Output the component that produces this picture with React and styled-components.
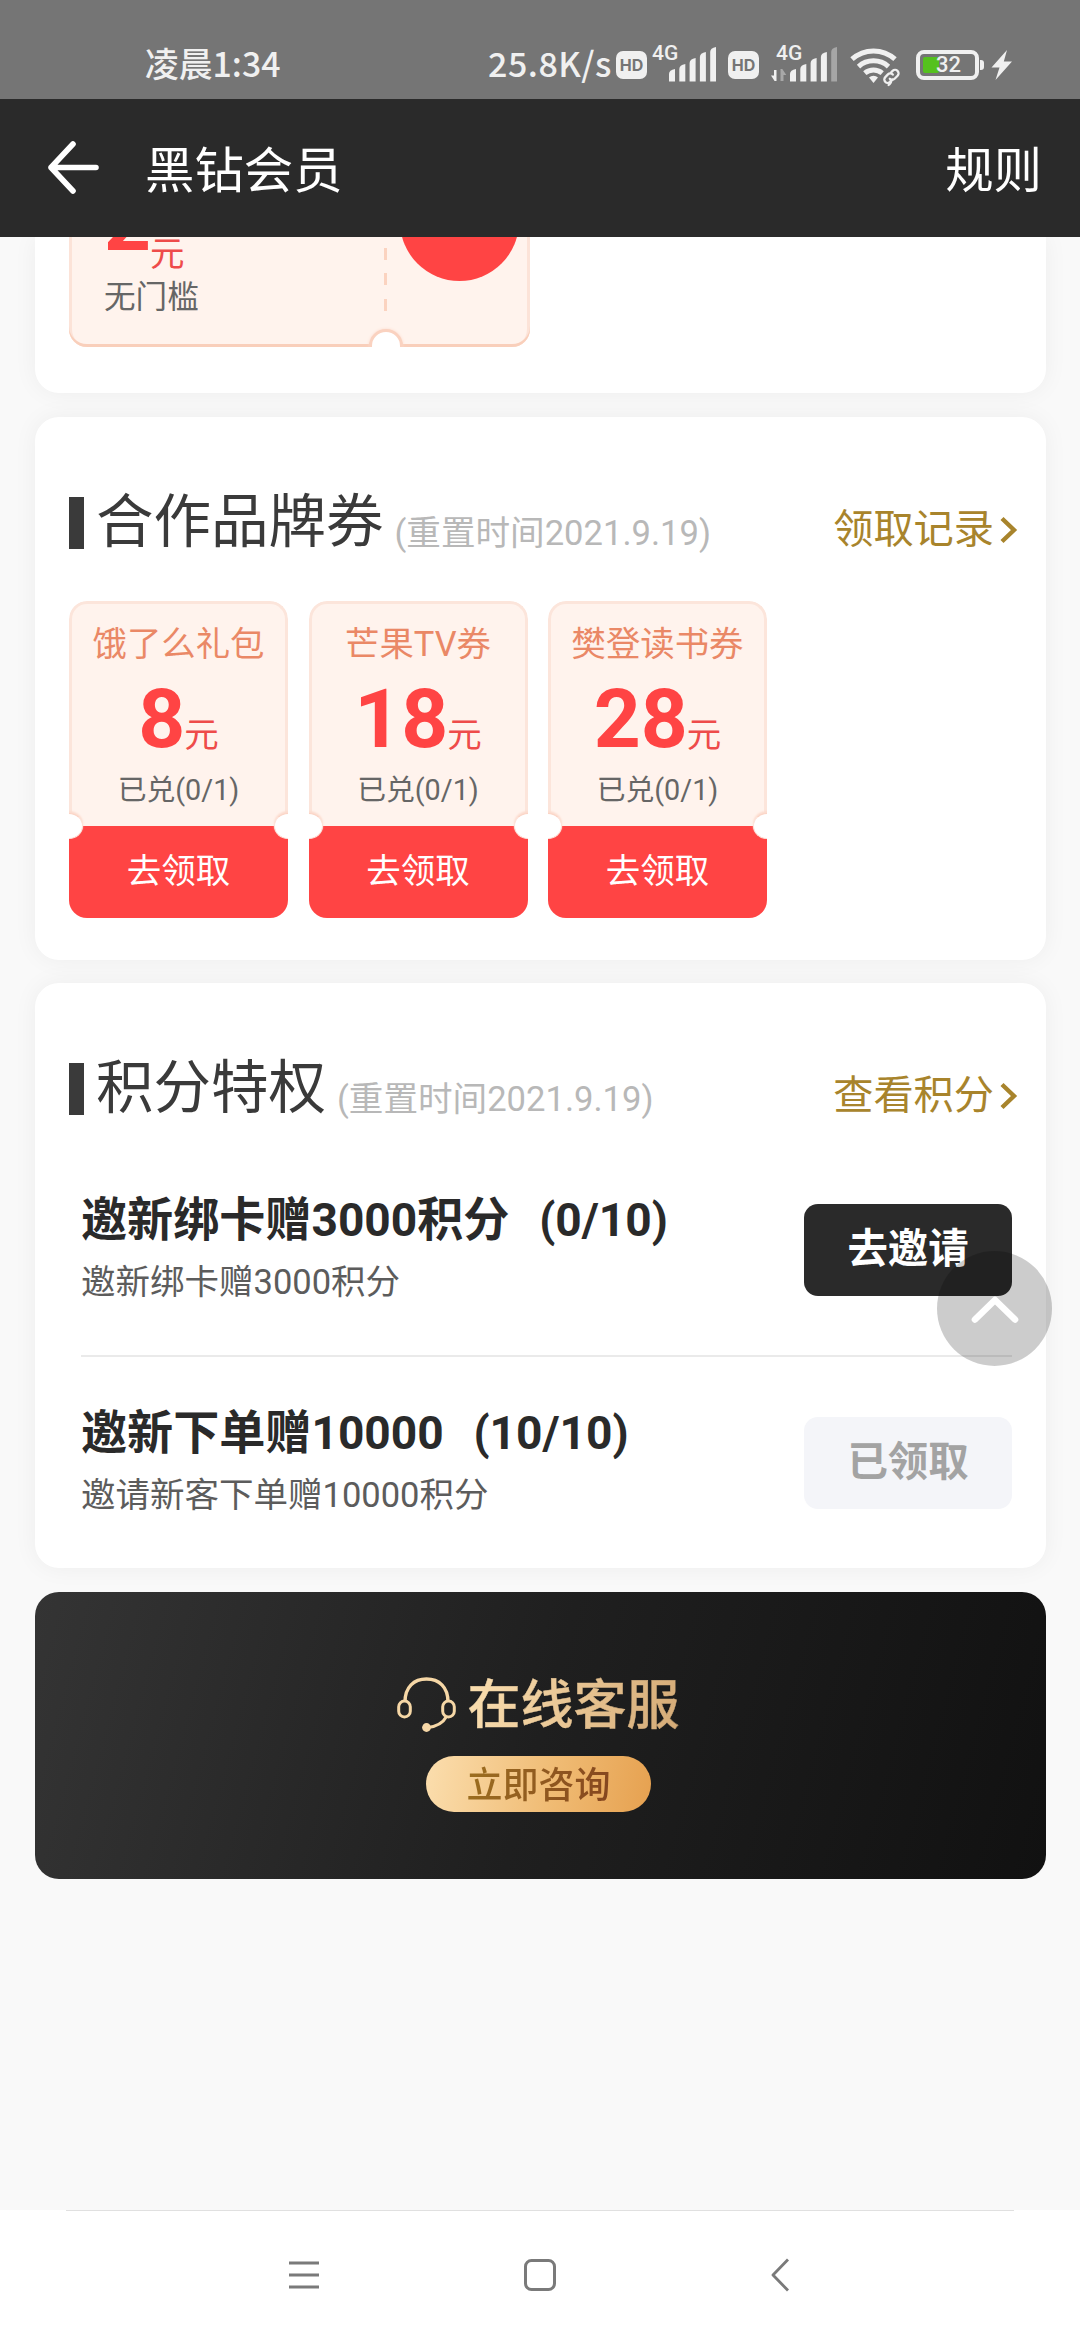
import React from 'react'
import styled, { createGlobalStyle, css } from 'styled-components'

const coupons = [
  { name: '饿了么礼包', price: 8, used: '已兑(0/1)' },
  { name: '芒果TV券', price: 18, used: '已兑(0/1)' },
  { name: '樊登读书券', price: 28, used: '已兑(0/1)' },
]

const tasks = [
  { title: '邀新绑卡赠3000积分  (0/10)', desc: '邀新绑卡赠3000积分', action: '去邀请', done: false },
  { title: '邀新下单赠10000  (10/10)', desc: '邀请新客下单赠10000积分', action: '已领取', done: true },
]

const barTops = [22, 17, 11, 5, 0]

function Signal({ weak, arrows }) {
  return (
    <SignalBox $arrows={arrows}>
      <NetType>4G</NetType>
      <svg width="66" height="36" viewBox="0 0 66 36">
        {arrows && (
          <g>
            <path d="M5.5 24v11H3.6L0 29.6h3V24z" fill="#f0f0f0" />
            <path d="M9.5 35V23h1.8l4 6h-2.8v6z" fill="#a8a8a8" />
          </g>
        )}
        {barTops.map((top, i) => (
          <path
            key={top}
            d={`M${19 + i * 10.3} 35.5V${top + 6}q0 -4 6 -5V35.5z`}
            fill={weak && i === 4 ? '#a6a6a6' : '#f0f0f0'}
          />
        ))}
      </svg>
    </SignalBox>
  )
}

function StatusBar() {
  return (
    <Status>
      <Clock>凌晨1:34</Clock>
      <Speed>25.8K/s</Speed>
      <Hd>HD</Hd>
      <Signal />
      <Hd $second>HD</Hd>
      <Signal weak arrows />
      <Wifi width="52" height="38" viewBox="0 0 52 38" fill="none" stroke="#f0f0f0">
        <path d="M2 13.2a32 32 0 0 1 43 0" strokeWidth="5" />
        <path d="M8.5 20.6a22.5 22.5 0 0 1 30 0" strokeWidth="5" />
        <path d="M14.8 27.2a13.5 13.5 0 0 1 17.4 0" strokeWidth="5" />
        <path d="M19 31.5a6.5 6.5 0 0 1 9 0L23.5 37z" fill="#f0f0f0" stroke="none" />
        <g stroke="#757575" strokeWidth="6">
          <rect x="34" y="28.5" width="9" height="6.5" rx="3.2" transform="rotate(-45 38.5 31.7)" />
        </g>
        <g strokeWidth="2.3" strokeLinecap="round">
          <path d="M40.5 33.5a3.6 3.6 0 0 1-.6 4.3l-1.3 1.2" />
          <path d="M41 26.5l1.6-1.6a3.4 3.4 0 0 1 5 4.8l-3 3a3.4 3.4 0 0 1-4.8 0" />
          <path d="M42.6 33.5l-2.4 2.4a3.4 3.4 0 0 1-4.9-4.8l2.6-2.7a3.4 3.4 0 0 1 4.9.2" />
        </g>
      </Wifi>
      <Battery>
        <Charge />
        <Level>32</Level>
      </Battery>
      <Tip />
      <svg width="22" height="30" viewBox="0 0 22 30">
        <path d="M16 0L.5 17.5h8L4.5 30 21 11.5h-8.2z" fill="#f0f0f0" />
      </svg>
    </Status>
  )
}

function SectionHead({ title, link }) {
  return (
    <Head>
      <Mark />
      <Title>{title}</Title>
      <ResetTime>(重置时间2021.9.19)</ResetTime>
      <Link>
        {link}
        <svg width="18" height="28" viewBox="0 0 18 28" fill="none">
          <path d="M2 2.5L14 14L2 25.5" stroke="#a8842c" strokeWidth="4.4" />
        </svg>
      </Link>
    </Head>
  )
}

function App() {
  return (
    <Screen>
      <GlobalStyle />
      <StatusBar />
      <Header>
        <svg width="54" height="56" viewBox="0 0 54 56" fill="none">
          <path d="M27 4L5 27.5L27 51M5 27.5H50" stroke="#fff" strokeWidth="5.6" strokeLinecap="round" strokeLinejoin="round" />
        </svg>
        <HeaderTitle>黑钻会员</HeaderTitle>
        <Rules>规则</Rules>
      </Header>

      <Content>
        <Card $cut>
          <WideCoupon>
            <WideInfo>
              <WidePrice><b>2</b><Yuan>元</Yuan></WidePrice>
              <Limit>无门槛</Limit>
            </WideInfo>
            <Dashes />
            <ReceiveCircle />
            <BottomNotch />
          </WideCoupon>
        </Card>

        <Card $height={543}>
          <SectionHead title="合作品牌券" link="领取记录" />
          <CouponList>
            {coupons.map((c) => (
              <Coupon key={c.name}>
                <CouponBody>
                  <CouponName>{c.name}</CouponName>
                  <Price>{c.price}<Yuan>元</Yuan></Price>
                  <Used>{c.used}</Used>
                </CouponBody>
                <GetButton>去领取</GetButton>
                <SideNotch $side="left" />
                <SideNotch $side="right" />
              </Coupon>
            ))}
          </CouponList>
        </Card>

        <Card $height={585}>
          <SectionHead title="积分特权" link="查看积分" />
          <TaskList>
            {tasks.map((t) => (
              <Task key={t.title}>
                <div>
                  <TaskTitle>{t.title}</TaskTitle>
                  <TaskDesc>{t.desc}</TaskDesc>
                </div>
                <TaskButton $done={t.done}>{t.action}</TaskButton>
              </Task>
            ))}
          </TaskList>
        </Card>

        <Service>
          <ServiceTitle>
            <svg width="60" height="56" viewBox="0 0 60 56" fill="none" stroke="#f6d7a6" strokeWidth="3">
              <path d="M8 25C8 10 17 2 29.5 2S51 10 51 25" strokeWidth="3.4" />
              <rect x="1.7" y="24" width="11.6" height="16" rx="5.8" />
              <rect x="45.7" y="24" width="11.6" height="16" rx="5.8" />
              <path d="M49.5 39.5C46 46 39 49.5 31 50.5" />
              <circle cx="29.5" cy="50.5" r="4.4" fill="#f6d7a6" stroke="none" />
            </svg>
            <span>在线客服</span>
          </ServiceTitle>
          <Consult><span>立即咨询</span></Consult>
        </Service>
      </Content>

      <BackTop>
        <svg width="50" height="32" viewBox="0 0 50 32" fill="none">
          <path d="M5 26.5L25 7L45 26.5" stroke="#fff" strokeWidth="6.6" strokeLinecap="round" strokeLinejoin="round" />
        </svg>
      </BackTop>

      <NavBar>
        <svg width="32" height="34" viewBox="0 0 32 34" stroke="#7a7a7a" strokeWidth="3">
          <path d="M1 5h30M1 17h30M1 29h30" />
        </svg>
        <HomeIcon width="34" height="34" viewBox="0 0 34 34" fill="none" stroke="#7a7a7a" strokeWidth="3">
          <rect x="2.5" y="2.5" width="29" height="29" rx="6" />
        </HomeIcon>
        <svg width="20" height="34" viewBox="0 0 20 34" fill="none" stroke="#7a7a7a" strokeWidth="2.8">
          <path d="M18 1.5L3 17L18 32.5" strokeLinejoin="round" />
        </svg>
      </NavBar>
    </Screen>
  )
}

export default App

const GlobalStyle = createGlobalStyle`
  body {
    margin: 0;
    background: #f9f9f9;
  }
  * {
    box-sizing: border-box;
  }
  svg {
    display: block;
    flex: none;
  }
`

const Screen = styled.div`
  position: relative;
  width: 1080px;
  height: 2340px;
  overflow: hidden;
  display: flex;
  flex-direction: column;
  background: #f9f9f9;
  font-family: Roboto, 'Noto Sans CJK SC', sans-serif;
  white-space: nowrap;
`

const Status = styled.div`
  height: 99px;
  flex: none;
  padding: 30px 0 0 145px;
  display: flex;
  align-items: center;
  background: #757575;
  color: #f0f0f0;
  font-family: 'Noto Sans CJK SC', sans-serif;
`

const Clock = styled.span`
  width: 343px;
  font-size: 33.8px;
  line-height: 40px;
  font-weight: 500;
  margin-top: -4px;
`

const Speed = styled.span`
  width: 128px;
  font-size: 34px;
  line-height: 40px;
  font-weight: 500;
  letter-spacing: 0.5px;
  margin-top: -4px;
`

const Hd = styled.span`
  width: 31px;
  height: 28px;
  margin-left: ${(p) => (p.$second ? '12px' : 0)};
  border-radius: 7px;
  background: #f0f0f0;
  color: #757575;
  font: 700 16px/28px Inter, sans-serif;
  text-align: center;
`

const SignalBox = styled.span`
  position: relative;
  width: ${(p) => (p.$arrows ? '66px' : '69px')};
  margin-left: ${(p) => (p.$arrows ? '12px' : 0)};
  padding-left: ${(p) => (p.$arrows ? 0 : '3px')};
  margin-top: -2px;
`

/* sits over the low end of the bars */
const NetType = styled.span`
  position: absolute;
  left: 5px;
  top: -3px;
  font: 500 21px/20px Roboto, sans-serif;
`

const Wifi = styled.svg`
  margin-left: 13px;
  overflow: visible;
`

const Battery = styled.span`
  width: 63px;
  height: 30px;
  margin-left: 14px;
  padding: 0 0 0 3px;
  border: 4px solid #f0f0f0;
  border-radius: 8px;
  display: flex;
  align-items: center;
`

const Charge = styled.i`
  width: 16px;
  height: 16px;
  background: #55c11e;
  border-radius: 2px;
`

const Level = styled.b`
  margin-left: -3px;
  font: 500 22px/22px Roboto, sans-serif;
`

const Tip = styled.i`
  width: 4px;
  height: 10px;
  margin: 0 7px 0 1px;
  border-radius: 0 3px 3px 0;
  background: #f0f0f0;
`

const Header = styled.header`
  height: 138px;
  flex: none;
  padding: 0 38px 0 46px;
  display: flex;
  align-items: center;
  background: #2a2a2a;
  color: #fff;
  font-size: 49.4px;
`

const HeaderTitle = styled.h1`
  margin: -3px 0 0 45px;
  flex: 1;
  font-size: inherit;
  font-weight: 400;
`

const Rules = styled.span`
  margin-top: -3px;
  font-size: 48.4px;
`

const Content = styled.main`
  flex: 1;
  overflow: hidden;
  padding: 0 34px 0 35px;
  display: flex;
  flex-direction: column;
`

const Card = styled.section`
  flex: none;
  height: ${(p) => p.$height}px;
  margin-bottom: 23.5px;
  padding: 80px 34px 0;
  border-radius: 24px;
  background: #fff;
  box-shadow: 0 0 24px rgba(0, 0, 0, 0.05);

  ${(p) =>
    p.$cut &&
    css`
      height: 156px;
      padding-top: 0;
      border-radius: 0 0 24px 24px;
    `}
`

const WideCoupon = styled.div`
  position: relative;
  width: 461px;
  height: 110px;
  padding: 0 3px 3px;
  overflow: hidden;
  display: flex;
  align-items: flex-end;
  border-radius: 0 0 18px 18px;
  background: #fff3ed;
  box-shadow: inset 0 -3px #f9cfbb, inset 3px 0 #fce3d8, inset -3px 0 #fce3d8;
`

const WideInfo = styled.div`
  width: 312px;
  padding: 0 0 28px 32px;
`

/* the unit hangs a little lower than the amount */
const WidePrice = styled.div`
  margin-bottom: 9px;
  display: flex;
  align-items: flex-end;
  color: #ff4444;

  & b {
    margin-bottom: 7px;
    font-size: 82px;
    line-height: 84px;
  }
`

const Yuan = styled.span`
  margin-left: -1px;
  color: #ee4b4a;
  font-size: 34.5px;
  font-weight: 400;
  line-height: 1;
`

const Limit = styled.div`
  color: #666;
  font-size: 31.6px;
  line-height: 36px;
`

const Dashes = styled.div`
  width: 3px;
  height: 63px;
  margin: 0 13px 33px 0;
  background: repeating-linear-gradient(#fbd3c0 0 12px, transparent 12px 25.5px);
`

const ReceiveCircle = styled.div`
  width: 119px;
  height: 119px;
  margin-bottom: 63px;
  flex: none;
  border-radius: 50%;
  background: #ff4444;
`

const BottomNotch = styled.i`
  position: absolute;
  left: 300px;
  bottom: -16px;
  width: 34px;
  height: 34px;
  border: 3px solid #fad2c0;
  border-radius: 50%;
  background: #fff;
  box-shadow: 0 0 3px #fcd9ca;
`

const Head = styled.div`
  height: 52px;
  display: flex;
  align-items: flex-end;
`

const Mark = styled.i`
  width: 15px;
  height: 52px;
  background: #3a3a3a;
`

const Title = styled.h2`
  margin: 0 0 0 12px;
  color: #3a3a3a;
  font-size: 57.5px;
  font-weight: 400;
  line-height: 52px;
`

const ResetTime = styled.span`
  margin-left: 11px;
  flex: 1;
  color: #b8b8b8;
  font-size: 34.6px;
  line-height: 31px;
`

const Link = styled.a`
  height: 38px;
  margin-right: -6px;
  display: flex;
  align-items: center;
  gap: 6px;
  color: #a8842c;
  font-size: 40.2px;
  line-height: 38px;
`

const CouponList = styled.div`
  margin-top: 52px;
  display: flex;
  gap: 20.5px;
`

const Coupon = styled.div`
  position: relative;
  width: 219px;
  height: 317px;
  overflow: hidden;
  border-radius: 18px;
  text-align: center;
`

const CouponBody = styled.div`
  height: 225px;
  padding-top: 16px;
  border: solid #fce5db;
  border-width: 3px 3px 0;
  border-radius: 18px 18px 0 0;
  background: #fff3ed;
`

const CouponName = styled.div`
  color: #ea8866;
  font-size: 34.4px;
  line-height: 48px;
`

const Price = styled.div`
  color: #ff4444;
  font-size: 82px;
  font-weight: 700;
  line-height: 102px;
`

const Used = styled.div`
  color: #666;
  font-size: 28.8px;
  line-height: 40px;
`

const GetButton = styled.button`
  display: block;
  width: 100%;
  height: 92px;
  padding: 0 0 8px;
  border: 0;
  background: #ff4444;
  color: #fff;
  font-family: inherit;
  font-size: 34.5px;
`

const SideNotch = styled.i`
  position: absolute;
  top: 212px;
  ${(p) => p.$side}: -14px;
  width: 28px;
  height: 26px;
  border: 1.5px solid #fde3da;
  border-top-color: #fbd3c4;
  border-radius: 50%;
  background: #fff;
  box-shadow: 0 -2px 2px #fcdccf;
`

const TaskList = styled.div`
  margin: 29px 0 0 12px;
`

const Task = styled.div`
  height: 211px;
  display: flex;
  align-items: center;
  justify-content: space-between;

  & + & {
    border-top: 2px solid #eaeaea;
    height: 213px;
  }
`

const TaskTitle = styled.div`
  color: #2a2a2a;
  font-size: 46.1px;
  font-weight: 700;
  line-height: 64px;
  word-spacing: 3.4px;
  white-space: pre;
`

const TaskDesc = styled.div`
  color: #5c5c5c;
  font-size: 34.5px;
  line-height: 60px;
`

const TaskButton = styled.button`
  width: 208px;
  height: 92px;
  padding: 0 0 9px;
  border: 0;
  border-radius: 14px;
  background: ${(p) => (p.$done ? '#f4f5f9' : '#2a2a2a')};
  color: ${(p) => (p.$done ? '#a3a3a3' : '#fff')};
  font-family: inherit;
  font-size: 40.4px;
  font-weight: 700;
`

const Service = styled.section`
  height: 287px;
  flex: none;
  padding-top: 76px;
  display: flex;
  flex-direction: column;
  align-items: center;
  border-radius: 24px;
  background: linear-gradient(105deg, #343434, #1f1f1f 50%, #111);
  font-family: 'Noto Sans CJK SC', sans-serif;
  font-weight: 500;
`

const ServiceTitle = styled.div`
  height: 74px;
  display: flex;
  align-items: center;
  gap: 11px;
  font-size: 53px;
  line-height: 74px;
  margin-right: 5px;

  & span {
    margin-top: -8px;
    background: linear-gradient(100deg, #fbdfb0, #d4aa76);
    background-clip: text;
    color: transparent;
    -webkit-text-stroke: 0.5px transparent;
  }
`

const Consult = styled.div`
  width: 225px;
  height: 56px;
  margin: 14px 4px 0 0;
  border-radius: 28px;
  background: linear-gradient(100deg, #fbdeae, #f0bc75 55%, #e6a150);
  font-size: 36px;
  line-height: 52px;
  text-align: center;

  & span {
    background: linear-gradient(100deg, #9d7020, #85451f);
    background-clip: text;
    color: transparent;
  }
`

/* floats over the task list */
const BackTop = styled.button`
  position: absolute;
  right: 28px;
  top: 1251px;
  width: 115px;
  height: 115px;
  padding: 0;
  border: 0;
  border-radius: 50%;
  display: flex;
  align-items: center;
  justify-content: center;
  background: rgba(0, 0, 0, 0.2);
`

const NavBar = styled.nav`
  height: 130px;
  flex: none;
  padding: 0 290px 0 288px;
  display: flex;
  align-items: center;
  justify-content: space-between;
  background: linear-gradient(#e0e0e0, #e0e0e0) 66px 0 / 948px 1px no-repeat #fff;
`

const HomeIcon = styled.svg`
  margin-right: 10px;
`
